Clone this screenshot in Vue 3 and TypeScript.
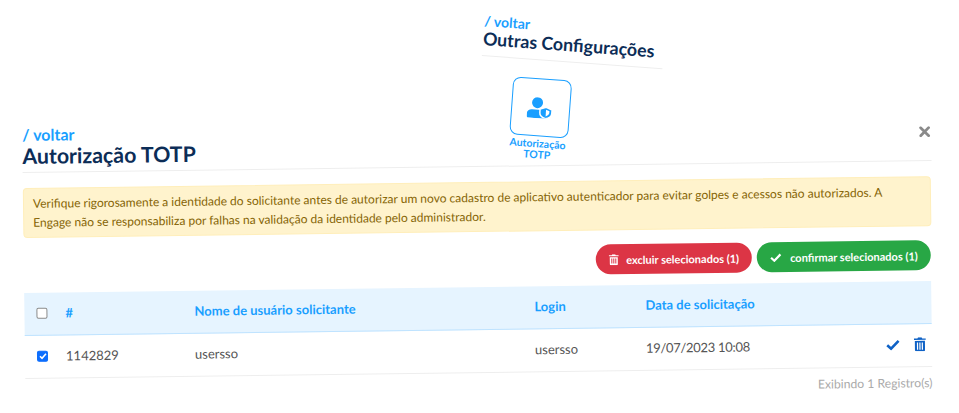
<script setup lang="ts">
const columns = ['#', 'Nome de usuário solicitante', 'Login', 'Data de solicitação']
const row = { id: '1142829', name: 'usersso', login: 'usersso', date: '19/07/2023 10:08' }
</script>

<template>
  <div class="page">
    <section class="config">
      <a class="back small">/ voltar</a>
      <h2 class="config-title">Outras Configurações</h2>
      <div class="tile-wrap">
        <div class="tile">
          <svg width="26" height="21" viewBox="0 0 26 21">
            <circle cx="10" cy="5.500" r="5.500" fill="#1a9fff" />
            <path d="M0 19v-2c0-3 2.500-4.500 5-4.500h9c2 0 3.500.6 4.500 1.500v7H2c-1.200 0-2-.8-2-2z" fill="#1a9fff" />
            <path d="M19 9.500l6 2.200v3.500c0 2.800-2.300 4.800-6 5.800-3.700-1-6-3-6-5.800v-3.500z" fill="#1a9fff" stroke="#fff" stroke-width="1.500" />
            <path d="M19 12v6.600c2-.7 3.500-2 3.500-3.600v-1.800z" fill="#fff" />
          </svg>
        </div>
        <div class="tile-label">Autorização<br />TOTP</div>
      </div>
    </section>

    <section class="modal">
      <header class="head">
        <div>
          <a class="back">/ voltar</a>
          <h1 class="title">Autorização TOTP</h1>
        </div>
        <svg class="close" width="11" height="11" viewBox="0 0 11 11">
          <path d="M1.500 1.500l8 8M9.500 1.500l-8 8" stroke="#8a8a8a" stroke-width="2.800" stroke-linecap="round" />
        </svg>
      </header>

      <div class="alert">
        Verifique rigorosamente a identidade do solicitante antes de autorizar um novo cadastro de aplicativo autenticador para evitar golpes e acessos não autorizados. A Engage não se responsabiliza por falhas na validação da identidade pelo administrador.
      </div>

      <div class="actions">
        <button class="btn red">
          <svg width="10" height="11" viewBox="0 0 10 11" fill="#fff">
            <path d="M3.500 0h3l.5 1h3v1H0V1h3zM1 3h8v7a1 1 0 0 1-1 1H2a1 1 0 0 1-1-1zm1.500 1.300v5h1v-5zm2 0v5h1v-5zm2 0v5h1v-5z" fill-rule="evenodd" />
          </svg>
          excluir selecionados (1)
        </button>
        <button class="btn green">
          <svg width="12" height="9" viewBox="0 0 12 9">
            <path d="M1.300 4.600l3.200 3L10.700 1.300" fill="none" stroke="#fff" stroke-width="2.200" />
          </svg>
          confirmar selecionados (1)
        </button>
      </div>

      <div class="table">
        <div class="grid thead">
          <span class="box"></span>
          <span v-for="c in columns" :key="c">{{ c }}</span>
          <span></span>
        </div>
        <div class="grid tbody">
          <span class="box checked">
            <svg width="8" height="7" viewBox="0 0 8 7"><path d="M1 3.500l2 2 4-4.500" fill="none" stroke="#fff" stroke-width="1.600" /></svg>
          </span>
          <span>{{ row.id }}</span>
          <span>{{ row.name }}</span>
          <span>{{ row.login }}</span>
          <span class="date">{{ row.date }}</span>
          <span class="row-actions">
            <svg width="14" height="11" viewBox="0 0 14 11">
              <path d="M1.300 5.500l3.800 3.500L12.700 1.300" fill="none" stroke="#0f62c6" stroke-width="2.600" />
            </svg>
            <svg width="12" height="14" viewBox="0 0 10 11.600" fill="#0f62c6">
              <path d="M3.500 0h3l.5 1h3v1.200H0V1h3zM.8 3h8.400v7.600a1 1 0 0 1-1 1H1.800a1 1 0 0 1-1-1zm1.700 1.300v6h1v-6zm2 0v6h1v-6zm2 0v6h1v-6z" fill-rule="evenodd" />
            </svg>
          </span>
        </div>
      </div>
      <div class="count">Exibindo 1 Registro(s)</div>
    </section>
  </div>
</template>

<style>
html, body { background: #fff; }
</style>

<style scoped>
.page {
  width: 959px;
  height: 413px;
  overflow: hidden;
  font-family: "Lato", "Noto Sans", sans-serif;
  color: #555;
}
.config {
  width: 181px;
  height: 100px;
  margin-left: 483px;
  padding-top: 13px;
  box-sizing: border-box;
  transform: rotate(4.200deg);
  transform-origin: 0 40px;
}
.back {
  display: block;
  color: #1a9fff;
  font-size: 16px;
  font-weight: 700;
  line-height: 16px;
}
.back.small { font-size: 14px; line-height: 15px; }
.config-title {
  margin: 0;
  padding-bottom: 6px;
  color: #0c2d57;
  font-size: 17.800px;
  font-weight: 700;
  line-height: 21px;
  border-bottom: 1px solid #eee;
  white-space: nowrap;
}
.tile-wrap {
  width: 76px;
  margin: 18px 0 0 24px;
  text-align: center;
}
.tile {
  display: flex;
  align-items: center;
  justify-content: center;
  width: 57px;
  height: 56px;
  margin: 0 auto;
  border: 1px solid #1a9fff;
  border-radius: 8px;
}
.tile-label {
  margin-top: 2px;
  color: #1a9fff;
  font-size: 10.500px;
  font-weight: 700;
  line-height: 11px;
}
.modal {
  width: 909px;
  margin: 27px 0 0 22px;
  transform: rotate(-0.750deg);
  transform-origin: 0 0;
}
.head {
  display: flex;
  justify-content: space-between;
  align-items: flex-start;
  height: 46px;
  box-sizing: border-box;
  border-bottom: 1px solid #eee;
}
.title {
  margin: 0;
  color: #0c2d57;
  font-size: 21.300px;
  font-weight: 700;
  line-height: 26px;
}
.close { margin-top: 11px; margin-right: 1px; }
.alert {
  margin: 15px 1px 0 0;
  padding: 5px 16px 5px 9px;
  background: #fff3cd;
  border: 1px solid #ffeeba;
  border-radius: 4px;
  color: #856404;
  font-size: 12px;
  line-height: 19px;
}
.actions {
  display: flex;
  justify-content: flex-end;
  gap: 5px;
  margin: 14px 2px 0 0;
}
.btn {
  display: flex;
  align-items: center;
  gap: 7px;
  height: 30px;
  padding: 0 13px;
  border: 0;
  border-radius: 15px;
  color: #fff;
  font-family: inherit;
  font-size: 11px;
  font-weight: 700;
}
.red { background: #dc3545; }
.green { background: #28a745; gap: 8px; }
.table { margin: 11px 2px 0 0; }
.grid {
  display: grid;
  grid-template-columns: 29px 129px 340px 111px 1fr auto;
  align-items: center;
  padding-left: 12px;
}
.thead {
  height: 43px;
  padding-bottom: 2px;
  box-sizing: border-box;
  background: #e6f4ff;
  border-bottom: 1px solid #bfe3ff;
  color: #1a9fff;
  font-size: 13px;
  font-weight: 700;
}
.tbody {
  height: 43px;
  padding-bottom: 2px;
  box-sizing: border-box;
  border-bottom: 1px solid #eee;
  font-size: 13px;
  color: #555;
}
.date { letter-spacing: -0.300px; }
.box {
  display: block;
  width: 11px;
  height: 11px;
  box-sizing: border-box;
  border: 1px solid #8a8a8a;
  border-radius: 2px;
  background: #fff;
}
.box.checked {
  display: flex;
  align-items: center;
  justify-content: center;
  background: #0d6efd;
  border-color: #0d6efd;
}
.row-actions {
  display: flex;
  align-items: center;
  gap: 14px;
  padding-right: 6px;
}
.count {
  margin-top: 9px;
  padding-right: 2px;
  text-align: right;
  color: #aaa;
  font-size: 12.200px;
  line-height: 14px;
}
</style>
